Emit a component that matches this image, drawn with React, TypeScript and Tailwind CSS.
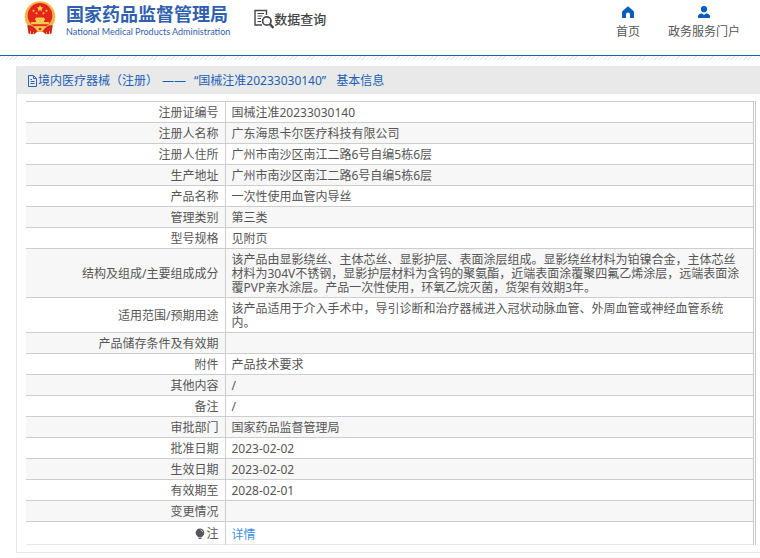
import type { ReactNode } from "react";

type Row = {
  label: string;
  value: string;
};

const rows: Row[] = [
  { label: "注册证编号", value: "国械注准20233030140" },
  { label: "注册人名称", value: "广东海思卡尔医疗科技有限公司" },
  { label: "注册人住所", value: "广州市南沙区南江二路6号自编5栋6层" },
  { label: "生产地址", value: "广州市南沙区南江二路6号自编5栋6层" },
  { label: "产品名称", value: "一次性使用血管内导丝" },
  { label: "管理类别", value: "第三类" },
  { label: "型号规格", value: "见附页" },
  {
    label: "结构及组成/主要组成成分",
    value:
      "该产品由显影绕丝、主体芯丝、显影护层、表面涂层组成。显影绕丝材料为铂镍合金，主体芯丝材料为304V不锈钢，显影护层材料为含钨的聚氨酯，近端表面涂覆聚四氟乙烯涂层，远端表面涂覆PVP亲水涂层。产品一次性使用，环氧乙烷灭菌，货架有效期3年。",
  },
  {
    label: "适用范围/预期用途",
    value: "该产品适用于介入手术中，导引诊断和治疗器械进入冠状动脉血管、外周血管或神经血管系统内。",
  },
  { label: "产品储存条件及有效期", value: "" },
  { label: "附件", value: "产品技术要求" },
  { label: "其他内容", value: "/" },
  { label: "备注", value: "/" },
  { label: "审批部门", value: "国家药品监督管理局" },
  { label: "批准日期", value: "2023-02-02" },
  { label: "生效日期", value: "2023-02-02" },
  { label: "有效期至", value: "2028-02-01" },
  { label: "变更情况", value: "" },
];

function Emblem() {
  return (
    <svg viewBox="0 0 32 34" className="h-[34px] w-8" aria-hidden="true">
      <path d="M3 22L4.500 32.500Q7 33.800 10.500 33L13 31h6l2.500 2q3.500.8 6-.5L29 22z" fill="#d8231c" />
      <circle cx="16" cy="15.500" r="15.300" fill="#f2c04f" />
      <circle cx="16" cy="15.500" r="14" fill="none" stroke="#e3a23a" strokeWidth="1" strokeDasharray="2 1" />
      <circle cx="16" cy="14.500" r="12.400" fill="#e4251c" />
      <path d="M16 4l1 2.200 2.400.2-1.800 1.600.6 2.300-2.200-1.200-2.200 1.200.6-2.300-1.800-1.600 2.400-.2z" fill="#f8d24a" />
      <g fill="#f8d24a">
        <circle cx="9.500" cy="9.800" r="1" />
        <circle cx="12.500" cy="12.200" r="1" />
        <circle cx="19.500" cy="12.200" r="1" />
        <circle cx="22.500" cy="9.800" r="1" />
      </g>
      <path d="M11 18l1.500-1.500h7L21 18v1.200h-1V21h5v2.300H7V21h5v-1.800h-1z" fill="#f7cb52" />
      <path d="M5.500 22.500L8 25h16l2.500-2.500-1 4.500h-19z" fill="#f0b440" />
      <path d="M4 25.500q5 .5 8 5.500M28 25.500q-5 .5-8 5.500" fill="none" stroke="#d8231c" strokeWidth="3" />
      <circle cx="16" cy="28" r="3" fill="#f5c54c" />
      <circle cx="16" cy="28" r="1.300" fill="#d8231c" />
      <path d="M6.500 30v3M9.500 31v2M25.500 30v3M22.500 31v2" stroke="#f0b440" strokeWidth="1" />
    </svg>
  );
}

function SearchDocIcon() {
  return (
    <svg viewBox="0 0 20 20" className="h-5 w-5" fill="none" stroke="#44474f" aria-hidden="true">
      <path d="M12.500 6V1.500H1v14.500h7" strokeWidth="1.400" />
      <path d="M3.500 4.500h6.500M3.500 7h5M3.500 9.500h3.500M3.500 12.500h3.500" strokeWidth="1" />
      <circle cx="12.800" cy="12" r="4.200" strokeWidth="1.700" />
      <path d="M15.900 15.200l3.600 3.800" strokeWidth="2.400" />
    </svg>
  );
}

function HomeIcon() {
  return (
    <svg viewBox="0 0 12 12" className="h-3 w-3" fill="#0a5cbf" aria-hidden="true">
      <path d="M6 .3L0 5.500V12h4V8.500a2 2 0 0 1 4 0V12h4V5.500z" />
    </svg>
  );
}

function UserIcon() {
  return (
    <svg viewBox="0 0 12 12" className="h-3 w-3" fill="#0a5cbf" aria-hidden="true">
      <circle cx="6" cy="3.200" r="3.100" />
      <path d="M0 12V9.800Q.3 8 3.700 7.300L6 9l2.300-1.700Q11.700 8 12 9.800V12z" />
    </svg>
  );
}

function DocIcon() {
  return (
    <svg viewBox="0 0 11 12" className="h-3 w-[11px]" fill="none" stroke="#2767b5" aria-hidden="true">
      <path d="M1.500 .5h5l3 3v8h-8zM6.500 .5v3h3" />
      <path d="M3.500 6.500h4M3.500 8.500h4M3.500 4.500h1.500" />
    </svg>
  );
}

function BulbIcon() {
  return (
    <svg viewBox="0 0 10 12" className="h-3 w-2.5" aria-hidden="true">
      <path d="M5 .5a4.300 4.300 0 0 0-2.600 7.700l1 1h3.200l1-1A4.300 4.300 0 0 0 5 .5z" fill="#55575c" />
      <path d="M3.500 9.800h3v1.200h-3z" fill="#55575c" />
      <path d="M5.500 2q2 .3 2.300 2.300" fill="none" stroke="#d5d5d5" strokeWidth="0.800" />
    </svg>
  );
}

function NavLink({ icon, children }: { icon: ReactNode; children: ReactNode }) {
  return (
    <a href="#" className="flex flex-col items-center gap-1 text-[#555]">
      {icon}
      <span className="pt-px leading-[18px]">{children}</span>
    </a>
  );
}

export default function App() {
  return (
    <div className="bg-white font-['Noto_Sans','Noto_Sans_CJK_SC',sans-serif] text-xs text-[#555]">
      <header className="flex h-14 items-start justify-between border-b border-[#1a66ad] pr-5 pl-6">
        <div className="flex items-start">
          <a href="#" className="flex items-start gap-[10px] pt-px text-[#2f5fae]">
            <Emblem />
            <span className="flex flex-col pt-[3px]">
              <span className="text-lg leading-5 font-bold">国家药品监督管理局</span>
              <span className="font-[Lato,sans-serif] text-[9px] leading-4">
                National Medical Products Administration
              </span>
            </span>
          </a>
          <h1 className="ml-6 flex items-center pt-[9px] text-[13px] leading-5 font-medium text-[#444]">
            <SearchDocIcon />
            数据查询
          </h1>
        </div>
        <nav className="flex gap-7 pt-[6px]">
          <NavLink icon={<HomeIcon />}>首页</NavLink>
          <NavLink icon={<UserIcon />}>政务服务门户</NavLink>
        </nav>
      </header>
      <div className="h-1 bg-[repeating-linear-gradient(135deg,#ececec_0_1px,#fff_1px_3px)]" />

      <main className="mt-[6px] ml-4 border-b border-l border-[#e6e6e6]">
        <h2 className="flex h-7 items-center bg-[#e9e9e9] pt-px pl-[10px] text-[#1b5fb4]">
          <DocIcon />
          <span>境内医疗器械（注册）</span>
          <span className="ml-1">——</span>
          <span className="ml-2">“国械注准20233030140”</span>
          <span className="ml-[10px]">基本信息</span>
        </h2>
        <div className="mt-[7px] mr-1 mb-[7px] ml-[9px] border-r-3 border-double border-[#c8c8c8]">
          <table className="w-full border-collapse leading-[14px]">
            <tbody>
              {rows.map((row) => (
                <tr key={row.label} className="h-[21px] border-y border-[#cdcdcd] even:bg-[#f7f7f7]">
                  <th scope="row" className="w-[199px] border-r border-[#cdcdcd] pt-1 pr-[6px] pb-[2px] text-right font-normal">
                    {row.label}
                  </th>
                  <td className="pt-1 pr-2 pb-[2px] pl-[6px]">{row.value}</td>
                </tr>
              ))}
              <tr className="h-[23px] border-b border-[#e8e8e8]">
                <th scope="row" className="border-r border-[#cdcdcd] pt-[5px] pr-[6px] pb-[3px] text-right font-normal">
                  <span className="flex items-center justify-end gap-px">
                    <BulbIcon />注
                  </span>
                </th>
                <td className="pt-[6px] pr-2 pb-[2px] pl-[6px]">
                  <a href="#" className="text-[#3e8ee6]">
                    详情
                  </a>
                </td>
              </tr>
            </tbody>
          </table>
        </div>
      </main>
    </div>
  );
}
